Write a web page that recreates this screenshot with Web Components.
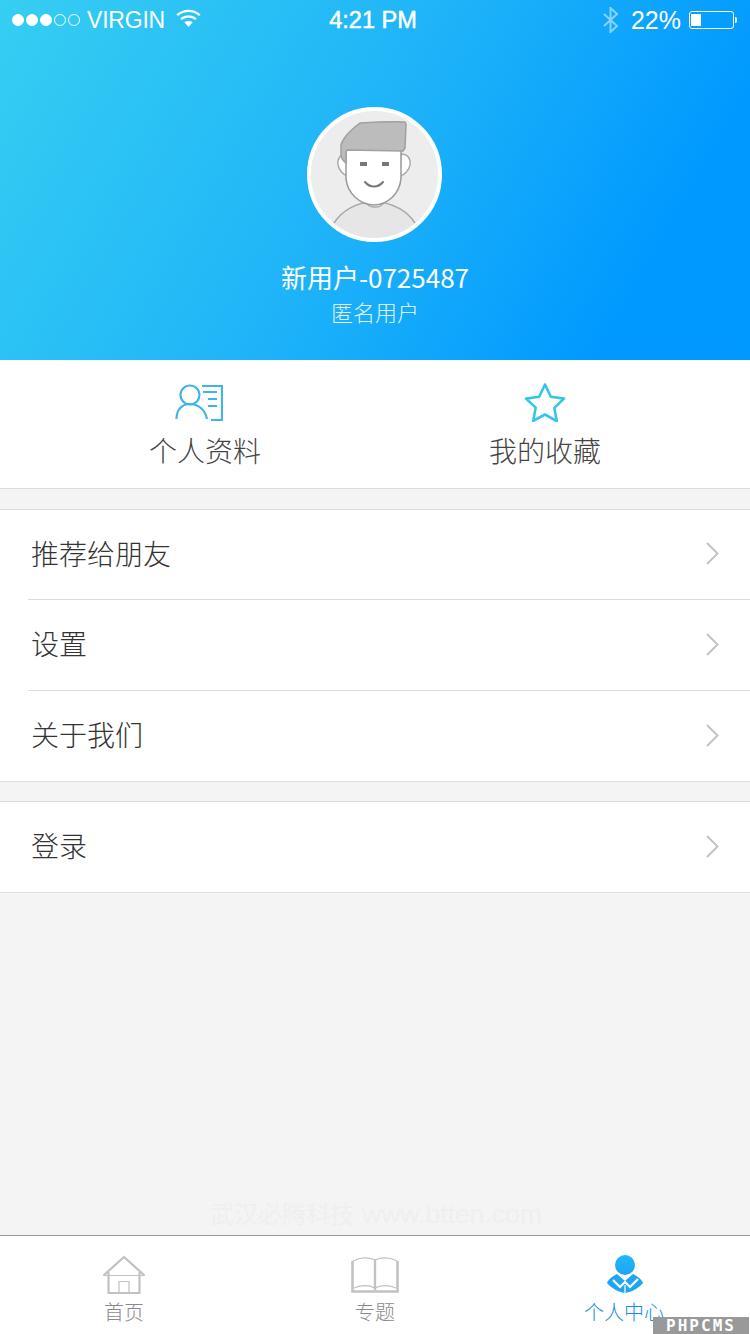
<!DOCTYPE html>
<html lang="zh">
<head>
<meta charset="utf-8">
<title>个人中心</title>
<style>
  html, body { margin: 0; padding: 0; }
  body {
    width: 750px;
    height: 1334px;
    overflow: hidden;
    background: #f4f4f4;
    font-family: "Noto Sans CJK SC", "Noto Sans", sans-serif;
    display: flex;
    flex-direction: column;
    position: relative;
  }
  .spacer { flex: 1; }
</style>
</head>
<body>
<profile-header name="新用户-0725487" role="匿名用户"></profile-header>
<quick-links></quick-links>
<menu-group style="margin-top:20px">
  <menu-row label="推荐给朋友" first></menu-row>
  <menu-row label="设置"></menu-row>
  <menu-row label="关于我们" last></menu-row>
</menu-group>
<menu-group style="margin-top:19px">
  <menu-row label="登录" last></menu-row>
</menu-group>
<div class="spacer"></div>
<water-mark></water-mark>
<tab-bar></tab-bar>

<script>
class StatusBar extends HTMLElement {
    constructor() {
        super();
        this.attachShadow({ mode: 'open' });
    }

    connectedCallback() {
        this.shadowRoot.innerHTML = `
      <style>
        :host {
          display: grid;
          grid-template-columns: 1fr auto 1fr;
          align-items: center;
          height: 40px;
          padding: 0 16px 0 12px;
          color: #fff;
          font-family: "Liberation Sans", Arial, sans-serif;
          font-size: 25px;
        }
        .left, .right { display: flex; align-items: center; }
        .right { justify-content: flex-end; }
        .dots { display: flex; gap: 2px; margin-right: 7px; }
        .dots i {
          width: 12px;
          height: 12px;
          box-sizing: border-box;
          border-radius: 50%;
          border: 1px solid #fff;
        }
        .dots i.on { background: #fff; }
        .wifi { margin-left: 11px; margin-top: -4px; }
        .time { font-size: 23.5px; -webkit-text-stroke: .5px #fff; }
        .bt { margin-right: 12px; opacity: .5; }
        .carrier { font-size: 23px; letter-spacing: -.2px; }
        .pct { font-size: 25px; margin-right: 8px; }
        .batt {
          width: 45px;
          height: 18px;
          box-sizing: border-box;
          border: 1px solid #fff;
          border-radius: 3px;
          padding: 2px 1px;
          position: relative;
        }
        .batt b { display: block; width: 10px; height: 100%; background: #fff; }
        .batt::after {
          content: '';
          position: absolute;
          right: -4px;
          top: 5px;
          width: 2px;
          height: 6px;
          background: #fff;
          border-radius: 0 2px 2px 0;
        }
      </style>
      <div class="left">
        <div class="dots"><i class="on"></i><i class="on"></i><i class="on"></i><i></i><i></i></div>
        <span class="carrier">VIRGIN</span>
        <svg class="wifi" width="25" height="18" viewBox="0 0 25 18" fill="none" stroke="#fff" stroke-width="2.4">
          <path d="M1.2 6.2C7.5.4 17.5.4 23.8 6.2"/>
          <path d="M5 10.2c4.300-3.800 10.700-3.800 15 0"/>
          <path d="M12.500 18l-4.200-4.700c2.400-1.900 6-1.900 8.400 0z" fill="#fff" stroke="none"/>
        </svg>
      </div>
      <span class="time">4:21 PM</span>
      <div class="right">
        <svg class="bt" width="17" height="26" viewBox="0 0 17 26" fill="none" stroke="#fff" stroke-width="2">
          <path d="M2 7l13 12-6.500 6V1L15 7 2 19"/>
        </svg>
        <span class="pct">22%</span>
        <div class="batt"><b></b></div>
      </div>
    `;
    }
}

class ProfileHeader extends HTMLElement {
    constructor() {
        super();
        this.attachShadow({ mode: 'open' });
    }

    connectedCallback() {
        const name = this.getAttribute('name') || '';
        const role = this.getAttribute('role') || '';
        this.shadowRoot.innerHTML = `
      <style>
        :host {
          display: flex;
          flex-direction: column;
          align-items: center;
          height: 360px;
          flex-shrink: 0;
          background: linear-gradient(120deg, #36cef2 0%, #1fb4f8 47%, #0099ff 84%);
          color: #fff;
        }
        status-bar { align-self: stretch; }
        .avatar {
          width: 135px;
          height: 135px;
          margin: 67px 1px 0 0;
          display: block;
        }
        .name { margin-top: 16px; font-size: 26px; font-weight: 400; line-height: 38px; }
        .role { margin-top: -1px; font-size: 22px; font-weight: 300; line-height: 32px; opacity: .88; }
      </style>
      <status-bar></status-bar>
      <svg class="avatar" viewBox="0 0 135 135">
        <circle cx="67.500" cy="67.500" r="65.500" fill="#ededed" stroke="#fff" stroke-width="4"/>
        <path d="M27 116c9-14 22-20 40-22 17 2 32 8 41 22a63 63 0 0 1-81 0z" fill="#e6e6e6"/>
        <path d="M27 116c9-14 22-20 40-22 17 2 32 8 41 22" fill="none" stroke="#aaa" stroke-width="1.500"/>
        <path d="M59 90v4c1 8 17 8 18 0v-4z" fill="#fff" stroke="#aaa" stroke-width="1.500"/>
        <path d="M40 47c-7 0-10 5-9 11 1 5 5 10 10 11zM94 47c7 0 10 5 9 11-1 5-5 10-10 11z" fill="#fff" stroke="#a6a6a6" stroke-width="1.300"/>
        <path d="M39 40h55v31c-1 16-14 27-27 27S40 87 39 71z" fill="#fff" stroke="#999" stroke-width="1.500"/>
        <path d="M34 49V38c2-8 11-16 19-22 15-1 30-2 45-1l1 2-1 24-2 3-56-1-1 2v11c-2-2-4-3-5-7z" fill="#bcbcbc" stroke="#a0a0a0" stroke-width="1.500" stroke-linejoin="round"/>
        <rect x="53" y="55" width="7" height="4" fill="#777"/>
        <rect x="75" y="55" width="7" height="4" fill="#777"/>
        <path d="M58 75c5 6 13 6 18 0" fill="none" stroke="#777" stroke-width="2" stroke-linecap="round"/>
      </svg>
      <div class="name">${name}</div>
      <div class="role">${role}</div>
    `;
    }
}

class QuickLinks extends HTMLElement {
    constructor() {
        super();
        this.attachShadow({ mode: 'open' });
    }

    connectedCallback() {
        this.shadowRoot.innerHTML = `
      <style>
        :host {
          display: grid;
          grid-template-columns: 410px 270px;
          box-sizing: border-box;
          height: 129px;
          flex-shrink: 0;
          background: #fff;
          border-bottom: 1px solid #dcdcdc;
        }
        .item {
          display: flex;
          flex-direction: column;
          align-items: center;
          color: #444;
          font-size: 28px;
          font-weight: 300;
          line-height: 40px;
          padding-top: 22px;
        }
        svg { display: block; height: 40px; margin-bottom: 8px; }
        svg.card { margin-right: 12px; }
      </style>
      <div class="item">
        <svg class="card" width="48" height="40" viewBox="0 0 48 40" fill="none" stroke="#3fb3ea" stroke-width="2.200">
          <path d="M27 4h20v34H36"/>
          <path d="M28 10h14M33 17h9M33 24h9" stroke-width="2"/>
          <circle cx="15" cy="13" r="9.500"/>
          <path d="M1.500 37c0-10 6-15 13.500-15s15 5 17 15"/>
        </svg>
        个人资料
      </div>
      <div class="item">
        <svg width="42" height="40" viewBox="0 0 42 40" fill="none" stroke="#38c4ea" stroke-width="2.600" stroke-linejoin="round">
          <path d="M21 2.500l5.800 12.300 13.200 1.800-9.700 9.300 2.500 13.300L21 32.500 9.200 38.900l2.500-13.300L2 16.600l13.200-1.800z"/>
        </svg>
        我的收藏
      </div>
    `;
    }
}

class MenuGroup extends HTMLElement {
    constructor() {
        super();
        this.attachShadow({ mode: 'open' });
    }

    connectedCallback() {
        this.shadowRoot.innerHTML = `
      <style>
        :host {
          display: block;
          flex-shrink: 0;
          background: #fff;
          border-top: 1px solid #dcdcdc;
          border-bottom: 1px solid #dcdcdc;
        }
      </style>
      <slot></slot>
    `;
    }
}

class MenuRow extends HTMLElement {
    constructor() {
        super();
        this.attachShadow({ mode: 'open' });
    }

    connectedCallback() {
        const label = this.getAttribute('label') || '';
        const last = this.hasAttribute('last');
        const first = this.hasAttribute('first');
        this.shadowRoot.innerHTML = `
      <style>
        :host { display: block; padding-left: 28px; }
        .row {
          box-sizing: border-box;
          height: ${last || first ? 90 : 91}px;
          display: flex;
          align-items: center;
          justify-content: space-between;
          padding: 0 31px 2px 3px;
          color: #333;
          font-size: 28px;
          font-weight: 300;
          ${last ? '' : 'border-bottom: 1px solid #dcdcdc;'}
        }
        span { position: relative; top: -1px; }
        svg { display: block; }
      </style>
      <div class="row">
        <span>${label}</span>
        <svg width="13" height="23" viewBox="0 0 13 23" fill="none" stroke="#c4c4c4" stroke-width="2">
          <path d="M1 1l10.500 10.500L1 22"/>
        </svg>
      </div>
    `;
    }
}

class WaterMark extends HTMLElement {
    constructor() {
        super();
        this.attachShadow({ mode: 'open' });
    }

    connectedCallback() {
        this.shadowRoot.innerHTML = `
      <style>
        :host {
          display: flex;
          justify-content: center;
          gap: 8px;
          flex-shrink: 0;
          height: 41px;
          padding-left: 2px;
          color: #efefef;
          font-family: "Liberation Sans", "Noto Sans CJK SC", sans-serif;
          font-size: 26.5px;
          line-height: 41px;
        }
        .cn { font-size: 24px; }
      </style>
      <span class="cn">武汉必腾科技</span><span>www.btten.com</span>
    `;
    }
}

class TabItem extends HTMLElement {
    constructor() {
        super();
        this.attachShadow({ mode: 'open' });
    }

    connectedCallback() {
        const active = this.hasAttribute('active');
        this.shadowRoot.innerHTML = `
      <style>
        :host {
          display: flex;
          flex-direction: column;
          align-items: center;
          padding-top: 19px;
          color: ${active ? '#148fdc' : '#8a8a8a'};
          font-size: 20px;
          font-weight: 300;
          line-height: 28px;
        }
        ::slotted(svg) { display: block; height: 40px; margin-bottom: 3px; }
      </style>
      <slot name="icon"></slot>
      <slot></slot>
    `;
    }
}

class TabBar extends HTMLElement {
    constructor() {
        super();
        this.attachShadow({ mode: 'open' });
    }

    connectedCallback() {
        this.shadowRoot.innerHTML = `
      <style>
        :host {
          display: grid;
          grid-template-columns: 248px 254px 244px;
          box-sizing: border-box;
          height: 99px;
          flex-shrink: 0;
          background: #fff;
          border-top: 1px solid #999;
        }
      </style>
      <tab-item>
        <svg slot="icon" width="44" height="40" viewBox="0 0 44 40" fill="none" stroke="#c2c2c2" stroke-width="2.200">
          <path d="M1.500 20.500L22 2l20.500 18.500"/>
          <path d="M1.500 20.500h41" stroke-width="1"/>
          <path d="M6.500 17v21h31V17"/>
          <path d="M17 38V26.500h10V38" stroke-width="1.200"/>
        </svg>
        首页
      </tab-item>
      <tab-item>
        <svg slot="icon" width="48" height="40" viewBox="0 0 48 40" fill="none" stroke="#c2c2c2" stroke-width="1.300">
          <path d="M1.500 6v30.500h45V6" stroke-width="2.600"/>
          <path d="M2 6C9 2 18 2 24 5c6-3 15-3 22 1"/>
          <path d="M3 33c7-3 15-3 21 0 6-3 14-3 21 0"/>
          <path d="M24 5v30" stroke-width="2.400"/>
        </svg>
        专题
      </tab-item>
      <tab-item active>
        <svg slot="icon" style="margin-left:2px" width="38" height="40" viewBox="0 0 38 40">
          <defs>
            <linearGradient id="tabUser" x1="0" y1="0" x2="0" y2="1">
              <stop offset="0" stop-color="#1fbaf8"/>
              <stop offset="1" stop-color="#1ea4f2"/>
            </linearGradient>
          </defs>
          <circle cx="19" cy="10" r="10" fill="url(#tabUser)"/>
          <path d="M11 19C5 22 2 25 1 28c4 5 11 9 18 10 7-1 14-5 18-10-1-3-4-6-10-9l-8 7z" fill="#1da6f3"/>
          <path d="M7 25l7 7 5-5 5 5 8-8" fill="none" stroke="#fff" stroke-width="2.200"/>
          <path d="M19 30v8" fill="none" stroke="#fff" stroke-width="1.200"/>
        </svg>
        个人中心
      </tab-item>
    `;
    }
}

class SiteBadge extends HTMLElement {
    constructor() {
        super();
        this.attachShadow({ mode: 'open' });
    }

    connectedCallback() {
        this.shadowRoot.innerHTML = `
      <style>
        :host {
          position: absolute;
          left: 653px;
          bottom: 0;
          width: 96px;
          height: 17px;
          background: #999;
          color: #fff;
          font-family: "DejaVu Sans Mono", monospace;
          font-size: 16px;
          font-weight: 700;
          line-height: 17px;
          text-align: center;
          letter-spacing: 2px;
        }
      </style>
      PHPCMS
    `;
    }
}

customElements.define('status-bar', StatusBar);
customElements.define('profile-header', ProfileHeader);
customElements.define('quick-links', QuickLinks);
customElements.define('menu-group', MenuGroup);
customElements.define('menu-row', MenuRow);
customElements.define('water-mark', WaterMark);
customElements.define('tab-item', TabItem);
customElements.define('tab-bar', TabBar);
customElements.define('site-badge', SiteBadge);

document.body.appendChild(document.createElement('site-badge'));
</script>
</body>
</html>
